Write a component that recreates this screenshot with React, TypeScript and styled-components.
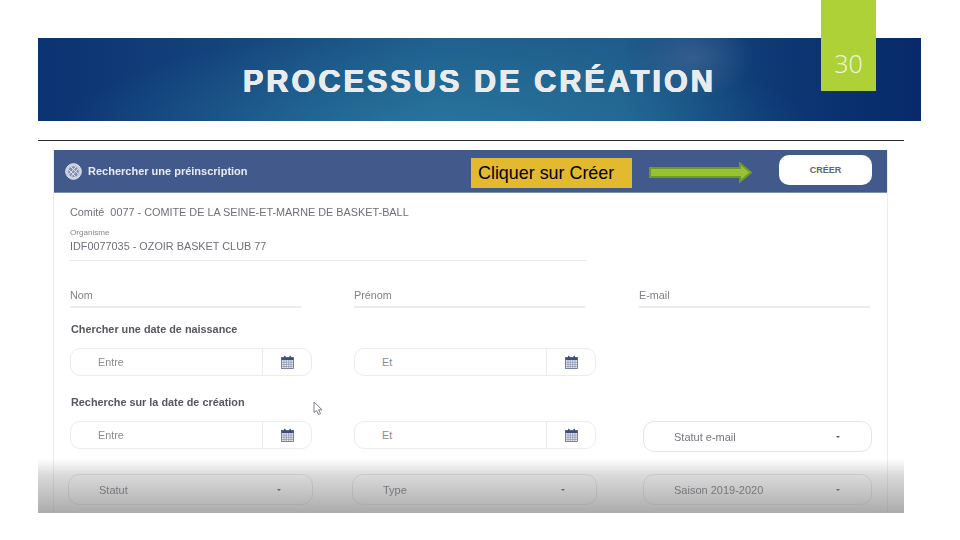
import React from "react";
import styled, { createGlobalStyle } from "styled-components";

const Global = createGlobalStyle`
  html, body { margin: 0; padding: 0; background: #fff; }
  body { font-family: "Liberation Sans", Arial, sans-serif; }
`;

const Slide = styled.div`
  position: relative;
  width: 960px;
  height: 540px;
  padding: 38px 0 0 38px;
  box-sizing: border-box;
  overflow: hidden;
  background: #fff;
`;
const Banner = styled.header`
  width: 883px;
  height: 83px;
  display: flex;
  align-items: center;
  justify-content: center;
  background:
    radial-gradient(ellipse 60px 40px at 655px 20px, rgba(70, 105, 150, 0.6), rgba(70, 105, 150, 0) 100%),
    radial-gradient(ellipse 380px 110px at 400px 100px, rgba(44, 130, 165, 0.7), rgba(44, 130, 165, 0) 100%),
    linear-gradient(90deg, #0b3272 0%, #14437c 20%, #1f5e8d 45%, #1f5c8b 66%, #0e3a75 82%, #07296a 100%);
`;
const Title = styled.h1`
  margin: 4px 0 0;
  font-family: "Liberation Sans", Arial, sans-serif;
  font-size: 30.5px;
  font-weight: 700;
  letter-spacing: 3.1px;
  color: #e9ecef;
  text-shadow: 0.6px 0 0 #e9ecef, -0.6px 0 0 #e9ecef, 0 0.3px 0 #e9ecef, 0 -0.3px 0 #e9ecef;
  white-space: nowrap;
`;
const PageTab = styled.div`
  position: absolute;
  left: 821px;
  top: 0;
  width: 55px;
  height: 91px;
  background: #add136;
  color: #f2f7e2;
  font-family: "Open Sans", sans-serif;
  font-weight: 300;
  font-size: 25px;
  line-height: 1;
  text-align: center;
  padding-top: 51px;
  box-sizing: border-box;
`;
const Rule = styled.hr`
  width: 866px;
  height: 1px;
  margin: 19px 0 9px;
  border: 0;
  background: #2a2a2a;
`;
const Panel = styled.section`
  width: 835px;
  height: 363px;
  margin-left: 15px;
  box-sizing: border-box;
  background: #fff;
  border-left: 1px solid #efe9f4;
  border-right: 1px solid #efe9f4;
  color: #6f7078;
`;
const PanelHead = styled.div`
  height: 43px;
  display: flex;
  align-items: center;
  padding: 0 15px 0 11px;
  background: #42598c;
  border-bottom: 1px solid #7f8fb3;
  box-sizing: border-box;
`;
const HeadTitle = styled.div`
  margin-left: 6px;
  width: 383px;
  font-size: 11px;
  font-weight: 700;
  color: #e8ebf2;
  filter: blur(0.3px);
  white-space: nowrap;
`;
const Callout = styled.div`
  width: 161px;
  height: 30px;
  margin-top: 4px;
  background: #e3b92f;
  color: #000;
  font-size: 17.9px;
  line-height: 30px;
  padding-left: 7px;
  box-sizing: border-box;
  white-space: nowrap;
`;
const ArrowWrap = styled.svg`
  margin-left: 17px;
  margin-top: 2px;
  flex: none;
`;
const CreateButton = styled.button`
  margin-left: auto;
  margin-top: -2px;
  width: 93px;
  height: 30px;
  border: 0;
  border-radius: 10px;
  background: #fff;
  color: #62646c;
  font-family: "Liberation Sans", Arial, sans-serif;
  font-size: 9px;
  font-weight: 700;
  padding: 0;
`;
const Body = styled.div`
  padding: 0 0 0 16px;
  filter: blur(0.45px);
`;
const Committee = styled.div`
  margin-top: 12px;
  font-size: 10.85px;
  line-height: 14px;
  white-space: nowrap;
`;
const TinyLabel = styled.div`
  margin-top: 9px;
  font-size: 8.1px;
  line-height: 9px;
  color: #85868c;
`;
const OrgField = styled.div`
  width: 516px;
  height: 23px;
  box-sizing: border-box;
  margin-top: 1px;
  font-size: 10.85px;
  line-height: 16px;
  border-bottom: 1px solid #e6e6e8;
`;
const Row = styled.div<{ $top: number; $left?: number }>`
  display: flex;
  margin-top: ${(p) => p.$top}px;
  margin-left: ${(p) => p.$left ?? 0}px;
  align-items: flex-start;
`;
const TextField = styled.div<{ $gap?: number }>`
  width: 231px;
  height: 17px;
  padding-top: 2px;
  margin-right: ${(p) => p.$gap ?? 0}px;
  font-size: 10.8px;
  line-height: 13px;
  color: #808188;
  border-bottom: 2px solid #ececee;
`;
const Heading = styled.div<{ $top: number }>`
  margin-top: ${(p) => p.$top}px;
  margin-left: 1px;
  font-size: 10.85px;
  font-weight: 700;
  line-height: 13px;
  color: #55565f;
  white-space: nowrap;
`;
const DateBox = styled.div<{ $gap?: number }>`
  width: 242px;
  height: 28px;
  margin-right: ${(p) => p.$gap ?? 0}px;
  display: flex;
  flex: none;
  box-sizing: border-box;
  border: 1px solid #ececf0;
  border-radius: 10px;
  background: #fff;
`;
const DateText = styled.div`
  flex: 1;
  padding-left: 27px;
  font-size: 10.8px;
  line-height: 26px;
  color: #8b8c92;
`;
const DateIcon = styled.div`
  width: 48px;
  display: flex;
  align-items: center;
  justify-content: center;
  border-left: 1px solid #ececf0;
`;
const SelectBox = styled.div<{ $w: number; $h: number; $gap?: number }>`
  width: ${(p) => p.$w}px;
  height: ${(p) => p.$h}px;
  margin-right: ${(p) => p.$gap ?? 0}px;
  display: flex;
  flex: none;
  align-items: center;
  justify-content: space-between;
  box-sizing: border-box;
  padding: 0 31px 0 30px;
  border: 1px solid #e6e4ea;
  border-radius: 11px;
  font-size: 11px;
  color: #75767d;
`;
const Caret = styled.span`
  width: 0;
  height: 0;
  border-left: 2.5px solid transparent;
  border-right: 2.5px solid transparent;
  border-top: 2.5px solid #55565e;
`;
const BottomFade = styled.div`
  position: absolute;
  left: 38px;
  top: 459px;
  width: 866px;
  height: 54px;
  background: linear-gradient(180deg, rgba(120, 120, 122, 0) 0%, rgba(120, 120, 122, 0.28) 30%, rgba(120, 120, 122, 0.62) 100%);
  pointer-events: none;
`;
const CursorMark = styled.svg`
  position: absolute;
  left: 313px;
  top: 401px;
`;

const Calendar = () => (
  <svg width="13" height="14" viewBox="0 0 13 14" aria-hidden="true">
    <rect x="0.5" y="2.5" width="12" height="11" fill="#eef0f6" stroke="#5b6688" strokeWidth="0.8" />
    <rect x="0.5" y="2.5" width="12" height="2.6" fill="#3f4d7d" />
    <rect x="3" y="0.8" width="1.6" height="3" rx="0.6" fill="#3f4d7d" />
    <rect x="8.4" y="0.8" width="1.6" height="3" rx="0.6" fill="#3f4d7d" />
    <path d="M0.5 7.2H12.5M0.5 9.3H12.5M0.5 11.4H12.5M3 5V13.5M5.3 5V13.5M7.7 5V13.5M10 5V13.5" stroke="#6d7694" strokeWidth="0.55" />
  </svg>
);

const Ball = () => (
  <svg width="17" height="17" viewBox="0 0 17 17" style={{ flex: "none" }} aria-hidden="true">
    <circle cx="8.5" cy="8.5" r="7.8" fill="#c7cedd" stroke="#e6e9f0" strokeWidth="1" />
    <circle cx="8.5" cy="8.5" r="5.2" fill="#42598c" opacity="0.55" />
    <path d="M4 11.5L11 3.8M6 13.5L13.3 5.5M3.5 6.5L10.5 13.5M6 4L13.2 11" stroke="#eef0f5" strokeWidth="0.9" fill="none" />
  </svg>
);

const DateField = ({ label, gap }: { label: string; gap?: number }) => (
  <DateBox $gap={gap}>
    <DateText>{label}</DateText>
    <DateIcon>
      <Calendar />
    </DateIcon>
  </DateBox>
);

const Select = ({ label, w, h, gap }: { label: string; w: number; h: number; gap?: number }) => (
  <SelectBox $w={w} $h={h} $gap={gap}>
    <span>{label}</span>
    <Caret />
  </SelectBox>
);

export default function App() {
  return (
    <Slide>
      <Global />
      <Banner>
        <Title>PROCESSUS DE CRÉATION</Title>
      </Banner>
      <Rule />
      <Panel>
        <PanelHead>
          <Ball />
          <HeadTitle>Rechercher une préinscription</HeadTitle>
          <Callout>Cliquer sur Créer</Callout>
          <ArrowWrap width="103" height="21" viewBox="0 0 103 21" aria-hidden="true">
            <path d="M1 6H91V1.5L102 10.5L91 19.5V15H1Z" fill="#98c22f" stroke="#6f9a26" strokeWidth="2" />
          </ArrowWrap>
          <CreateButton>CRÉER</CreateButton>
        </PanelHead>
        <Body>
          <Committee>Comité&nbsp; 0077 - COMITE DE LA SEINE-ET-MARNE DE BASKET-BALL</Committee>
          <TinyLabel>Organisme</TinyLabel>
          <OrgField>IDF0077035 - OZOIR BASKET CLUB 77</OrgField>
          <Row $top={26}>
            <TextField $gap={53}>Nom</TextField>
            <TextField $gap={54}>Prénom</TextField>
            <TextField>E-mail</TextField>
          </Row>
          <Heading $top={15}>Chercher une date de naissance</Heading>
          <Row $top={12}>
            <DateField label="Entre" gap={42} />
            <DateField label="Et" />
          </Row>
          <Heading $top={20}>Recherche sur la date de création</Heading>
          <Row $top={12}>
            <DateField label="Entre" gap={42} />
            <DateField label="Et" gap={47} />
            <Select label="Statut e-mail" w={229} h={31} />
          </Row>
          <Row $top={22} $left={-2}>
            <Select label="Statut" w={245} h={31} gap={39} />
            <Select label="Type" w={245} h={31} gap={46} />
            <Select label="Saison 2019-2020" w={229} h={31} />
          </Row>
        </Body>
      </Panel>
      <PageTab>30</PageTab>
      <CursorMark width="11" height="15" viewBox="0 0 11 15" aria-hidden="true">
        <path d="M1 1V11.5L3.5 9.5L5.5 13.5L7.5 12.5L5.6 8.8H9Z" fill="#fff" stroke="#70747c" strokeWidth="0.9" />
      </CursorMark>
      <BottomFade />
    </Slide>
  );
}
